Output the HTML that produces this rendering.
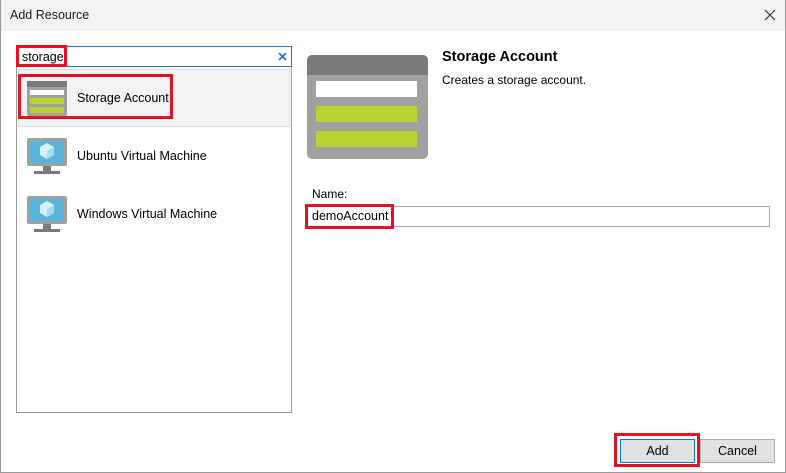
<!DOCTYPE html>
<html><head><style>
*{margin:0;padding:0;box-sizing:border-box}
body{width:786px;height:473px;background:#fff;font-family:"Liberation Sans",sans-serif;font-size:12px;color:#000;position:relative;overflow:hidden}
.a{position:absolute}
.red{position:absolute;border:3px solid #e81123}
</style></head><body>
<div class="a" style="left:0;top:0;width:786px;height:31px;background:#f3f3f3"></div>
<div class="a" style="left:10px;top:8px;font-size:12.5px;color:#1a1a1a">Add Resource</div>
<svg class="a" style="left:764px;top:9px" width="12" height="12" viewBox="0 0 12 12"><path d="M1 1L11 11M11 1L1 11" stroke="#333" stroke-width="1.2"/></svg>
<div class="a" style="left:0;top:0;width:786px;height:473px;border:1px solid #999;border-top:none"></div>
<div class="a" style="left:16px;top:46px;width:276px;height:21px;border:1px solid #1e78c8"></div>
<div class="a" style="left:22px;top:50px;font-size:12.5px">storage</div>
<svg class="a" style="left:278px;top:52px" width="9" height="9" viewBox="0 0 9 9"><path d="M1 1L8 8M8 1L1 8" stroke="#1e78c8" stroke-width="1.8"/></svg>
<div class="red" style="left:16px;top:45px;width:51px;height:22px"></div>
<div class="a" style="left:16px;top:67px;width:276px;height:346px;border:1px solid #9a9a9a;border-top:none"></div>
<div class="a" style="left:18px;top:69px;width:272px;height:58px;background:#f3f3f3;border:1px solid #ddd"></div>
<svg class="a" style="left:27px;top:81px" width="40" height="35" viewBox="0 0 40 35"><rect width="40" height="35" rx="2" fill="#a0a0a0"/><rect width="40" height="6" fill="#7a7a7a"/><rect x="3" y="9" width="34" height="5" fill="#fff"/><rect x="3" y="17" width="34" height="6" fill="#b8d432"/><rect x="3" y="26" width="34" height="6" fill="#b8d432"/></svg>
<div class="a" style="left:77px;top:91px;font-size:12.5px">Storage Account</div>
<div class="red" style="left:18px;top:74px;width:155px;height:45px"></div>
<svg class="a" style="left:27px;top:138px" width="40" height="38" viewBox="0 0 40 38"><rect width="40" height="28" rx="2" fill="#a0a0a0"/><rect x="3" y="3" width="34" height="22" fill="#59b4d9"/><path d="M20 5l7 4v8l-7 4-7-4V9z" fill="#d6eef8"/><path d="M20 13v8l7-4V9z" fill="#a8daf0"/><rect x="16" y="28" width="8" height="5" fill="#7a7a7a"/><rect x="7" y="33" width="26" height="3" fill="#7a7a7a"/></svg>
<div class="a" style="left:77px;top:149px;font-size:12.5px">Ubuntu Virtual Machine</div>
<svg class="a" style="left:27px;top:196px" width="40" height="38" viewBox="0 0 40 38"><rect width="40" height="28" rx="2" fill="#a0a0a0"/><rect x="3" y="3" width="34" height="22" fill="#59b4d9"/><path d="M20 5l7 4v8l-7 4-7-4V9z" fill="#d6eef8"/><path d="M20 13v8l7-4V9z" fill="#a8daf0"/><rect x="16" y="28" width="8" height="5" fill="#7a7a7a"/><rect x="7" y="33" width="26" height="3" fill="#7a7a7a"/></svg>
<div class="a" style="left:77px;top:207px;font-size:12.5px">Windows Virtual Machine</div>
<svg class="a" style="left:307px;top:55px" width="121" height="104" viewBox="0 0 121 104"><rect width="121" height="104" rx="5" fill="#a0a0a0"/><path d="M0 5a5 5 0 0 1 5-5h111a5 5 0 0 1 5 5v15H0z" fill="#7a7a7a"/><rect x="9" y="26" width="101" height="16" fill="#fff"/><rect x="9" y="51" width="101" height="16" fill="#b8d432"/><rect x="9" y="76" width="101" height="16" fill="#b8d432"/></svg>
<div class="a" style="left:442px;top:49px;font-size:14.5px;font-weight:bold">Storage Account</div>
<div class="a" style="left:442px;top:73px;font-size:12px">Creates a storage account.</div>
<div class="a" style="left:312px;top:187px;font-size:12px">Name:</div>
<div class="a" style="left:307px;top:206px;width:463px;height:21px;border:1px solid #aaa"></div>
<div class="a" style="left:312px;top:209px;font-size:12.5px">demoAccount</div>
<div class="red" style="left:305px;top:204px;width:89px;height:25px"></div>
<div class="a" style="left:620px;top:439px;width:75px;height:24px;background:#e1e1e1;border:1px solid #0078d7;text-align:center;line-height:22px;font-size:12.5px">Add</div>
<div class="red" style="left:614px;top:433px;width:86px;height:34px"></div>
<div class="a" style="left:700px;top:439px;width:75px;height:24px;background:#e1e1e1;border:1px solid #adadad;text-align:center;line-height:22px;font-size:12.5px">Cancel</div>
</body></html>
